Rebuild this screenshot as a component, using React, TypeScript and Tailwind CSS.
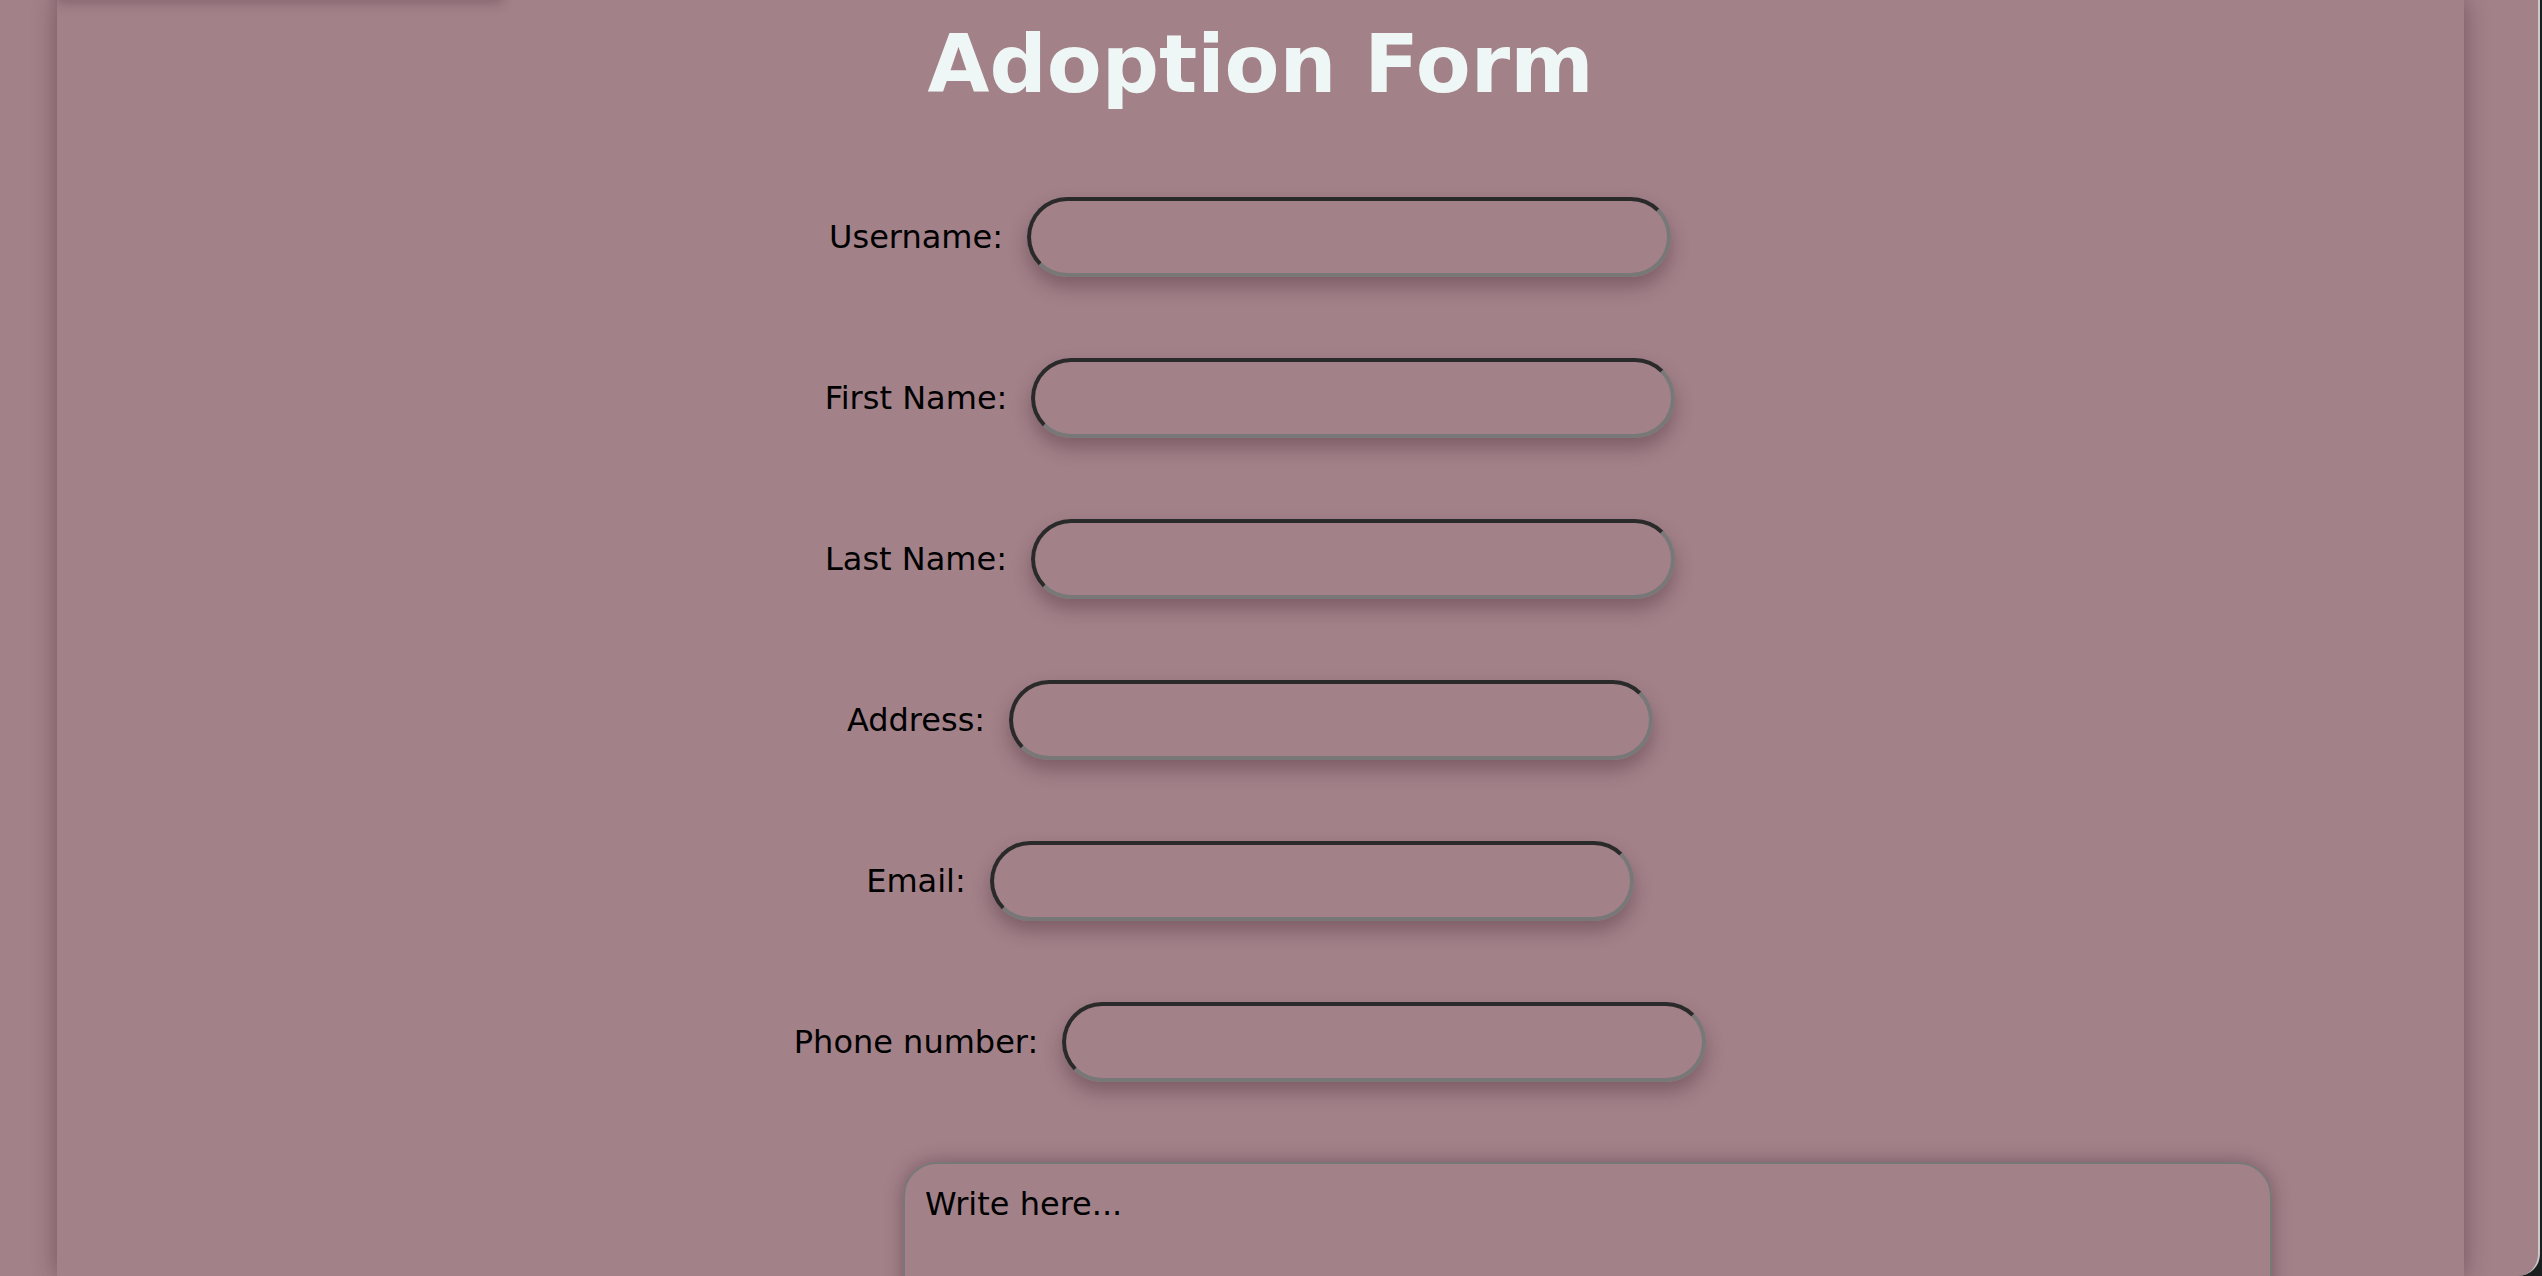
const fields = [
  { id: "username", label: "Username:" },
  { id: "firstName", label: "First Name:" },
  { id: "lastName", label: "Last Name:" },
  { id: "address", label: "Address:" },
  { id: "email", label: "Email:" },
  { id: "phone", label: "Phone number:" },
];

function Field({ id, label }: { id: string; label: string }) {
  return (
    <div className="flex items-center gap-[24px]">
      <label htmlFor={id} className="text-[32px] leading-normal text-black">
        {label}
      </label>
      <input
        id={id}
        type="text"
        className="h-[80px] w-[644px] rounded-full border-4 border-t-[#2a2a2a] border-l-[#2a2a2a] border-b-[#787878] border-r-[#787878] bg-transparent px-6 text-[32px] outline-none shadow-[0_10px_18px_rgba(60,30,40,0.35)]"
      />
    </div>
  );
}

export default function App() {
  return (
    <div className="h-[1276px] w-full overflow-hidden bg-[#1b1f1f] font-['DejaVu_Sans',Verdana,sans-serif]">
      <div className="relative h-full w-[2540px] overflow-hidden rounded-br-[22px] border-r-2 border-[#c9c9c9] bg-[#a28189]">
        <div className="absolute left-[57px] top-[-10px] h-[10px] w-[445px] shadow-[0_2px_12px_rgba(60,30,40,0.35)]" />
        <main className="ml-[57px] h-full w-[2407px] bg-[#a28189] shadow-[0_0_22px_rgba(60,30,40,0.45)]">
          <h1 className="pt-[5px] text-center text-[80px] font-bold leading-normal text-[#eef7f5]">
            Adoption Form
          </h1>
          <form className="mt-[72px] pr-[21px]">
            <div className="flex flex-col items-center gap-[81px]">
              {fields.map((f) => (
                <Field key={f.id} {...f} />
              ))}
            </div>
            <textarea
              placeholder="Write here..."
              className="ml-[846px] mt-[80px] block h-[300px] w-[1369px] resize-none rounded-[34px] border-2 border-[#787878] bg-transparent px-[20px] py-[16px] text-[32px] text-black placeholder:text-black outline-none shadow-[0_0_18px_rgba(60,30,40,0.4)]"
            />
          </form>
        </main>
      </div>
    </div>
  );
}
